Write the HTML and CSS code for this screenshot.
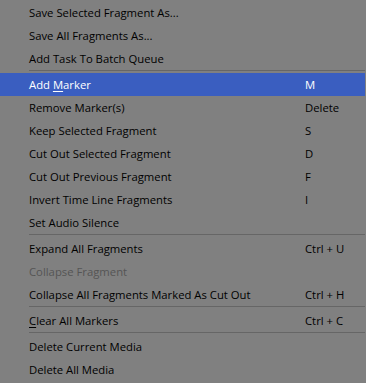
FILE: index.html
```html
<!DOCTYPE html>
<html lang="en">
<head>
    <meta charset="UTF-8">
    <title>Fragment Menu</title>
    <link rel="stylesheet" href="styles.css">
</head>
<body>

<div class="menu">
    <div class="menu-item"><span class="label">Save Selected Fragment As...</span></div>
    <div class="menu-item"><span class="label">Save All Fragments As...</span></div>
    <div class="menu-item"><span class="label">Add Task To Batch Queue</span></div>
    <div class="separator"></div>
    <div class="menu-item active"><span class="label">Add <u>M</u>arker</span><span class="key">M</span></div>
    <div class="menu-item"><span class="label">Remove Marker(s)</span><span class="key">Delete</span></div>
    <div class="menu-item"><span class="label">Keep Selected Fragment</span><span class="key">S</span></div>
    <div class="menu-item"><span class="label">Cut Out Selected Fragment</span><span class="key">D</span></div>
    <div class="menu-item"><span class="label">Cut Out Previous Fragment</span><span class="key">F</span></div>
    <div class="menu-item"><span class="label">Invert Time Line Fragments</span><span class="key">I</span></div>
    <div class="menu-item"><span class="label">Set Audio Silence</span></div>
    <div class="separator"></div>
    <div class="menu-item"><span class="label">Expand All Fragments</span><span class="key">Ctrl + U</span></div>
    <div class="menu-item disabled"><span class="label">Collapse Fragment</span></div>
    <div class="menu-item"><span class="label">Collapse All Fragments Marked As Cut Out</span><span class="key">Ctrl + H</span></div>
    <div class="separator"></div>
    <div class="menu-item"><span class="label"><u>C</u>lear All Markers</span><span class="key">Ctrl + C</span></div>
    <div class="separator"></div>
    <div class="menu-item"><span class="label">Delete Current Media</span></div>
    <div class="menu-item"><span class="label">Delete All Media</span></div>
</div>

</body>
</html>
```

FILE: styles.css
```css
* {
    margin: 0;
    padding: 0;
    box-sizing: border-box;
}

body {
    background: #808080;
    font-family: 'Open Sans', 'Noto Sans', sans-serif;
    font-size: 11.3px;
    color: #000;
}

.menu {
    width: 366px;
    padding-top: 1px;
}

.menu-item {
    display: flex;
    align-items: center;
    height: 23px;
    padding-left: 29px;
    white-space: nowrap;
}

.menu-item .label {
    width: 276px;
}

.menu-item u {
    text-underline-offset: 2px;
}

.menu-item.active {
    background: #3a5ec0;
    color: #fff;
    margin-right: 1px;
}

.menu-item.disabled {
    color: #555;
}

.separator {
    height: 1px;
    margin: 0 1px 2px 29px;
    background: #666;
}
```
